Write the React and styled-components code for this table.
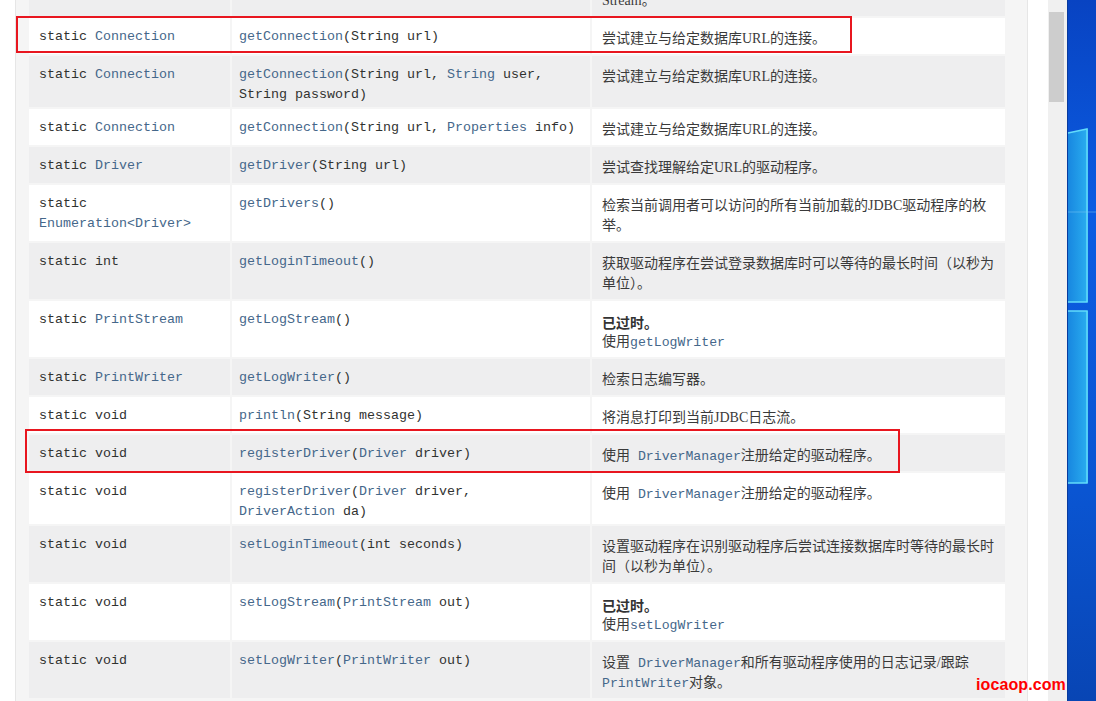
import React from 'react'
import styled, { createGlobalStyle } from 'styled-components'

const GlobalStyle = createGlobalStyle`
  html, body {
    margin: 0;
    padding: 0;
    background: #fff;
    overflow: hidden;
  }
  * { box-sizing: border-box; }
`

const LINK = '#45678a'
const TEXT = '#303230'
const MONO = '"Liberation Mono", "DejaVu Sans Mono", monospace'

const Screen = styled.div`
  position: relative;
  display: flex;
  width: 1096px;
  height: 701px;
  overflow: hidden;
  background: #fff;
`

const Viewport = styled.div`
  position: relative;
  flex: none;
  width: 1048px;
  height: 100%;
  padding: 0 20px 0 15px;
  overflow: hidden;
  background: #fff;
`

const Card = styled.div`
  margin-top: -42px;
  padding: 0 20px 2px 11px;
  background: #f5f5f5;
  border-left: 1px solid #e6e6e6;
  border-right: 1px solid #e6e6e6;
  border-bottom: 1px solid #e6e6e6;
`

const Table = styled.div`
  display: grid;
  grid-template-columns: 201px 358px 413px;
  gap: 2px;
  padding: 2px;
  background: #f5f5f5;
`

const Cell = styled.div`
  background: ${p => (p.$alt ? '#eeeeef' : '#fff')};
  color: ${TEXT};
  line-height: 20px;
`

const TypeCell = styled(Cell)`
  padding: 9px 8px 2px 10px;
  font-family: ${MONO};
  font-size: 13.33px;
`

const MethodCell = styled(Cell)`
  padding: 9px 8px 2px 7px;
  font-family: ${MONO};
  font-size: 13.33px;
`

const DescCell = styled(Cell)`
  padding: 11px 8px 5px 10px;
  font-family: "Liberation Serif", "Noto Sans CJK SC", serif;
  font-size: 14px;
  color: #3a3a3a;
`

const Link = styled.span`
  color: ${LINK};
`

const Code = styled.code`
  font-family: ${MONO};
  font-size: 13.2px;
  line-height: 1;
  color: ${LINK};
`

const Deprecated = styled.div`
  font-family: "Noto Sans CJK SC", sans-serif;
  font-weight: 700;
  color: #333;
`

const Highlight = styled.div`
  position: absolute;
  left: ${p => p.$x}px;
  top: ${p => p.$y}px;
  width: ${p => p.$w}px;
  height: ${p => p.$h}px;
  border: 2px solid #e8161f;
  pointer-events: none;
`

const Scrollbar = styled.div`
  flex: none;
  width: 19px;
  height: 100%;
  padding: 12px 3px 0 1px;
  background: #f0f0f0;
`

const Thumb = styled.div`
  height: 90px;
  background: #cdcdcd;
`

const Desktop = styled.div`
  flex: none;
  width: 29px;
  height: 100%;
  background: #0a4fc8;
  svg { display: block; }
`

const Watermark = styled.div`
  position: absolute;
  left: 976px;
  top: 677px;
  font-family: "Liberation Sans", Arial, sans-serif;
  font-size: 16px;
  font-weight: 700;
  line-height: 16px;
  color: #ff0000;
  letter-spacing: 0.1px;
`

const rows = [
  {
    type: ['void'],
    method: ['deregisterDriver', [['Driver', 'driver', true]]],
    desc: <>从 <Code>DriverManager</Code>的日志记录中删除 Print<br />Stream。</>,
  },
  {
    type: ['Connection', true],
    method: ['getConnection', [['String', 'url']]],
    desc: '尝试建立与给定数据库URL的连接。',
  },
  {
    type: ['Connection', true],
    method: ['getConnection', [['String', 'url'], ['String', 'user', true], ['String', 'password']]],
    desc: '尝试建立与给定数据库URL的连接。',
  },
  {
    type: ['Connection', true],
    method: ['getConnection', [['String', 'url'], ['Properties', 'info', true]]],
    desc: '尝试建立与给定数据库URL的连接。',
  },
  {
    type: ['Driver', true],
    method: ['getDriver', [['String', 'url']]],
    desc: '尝试查找理解给定URL的驱动程序。',
  },
  {
    type: ['Enumeration<Driver>', true],
    method: ['getDrivers', []],
    desc: '检索当前调用者可以访问的所有当前加载的JDBC驱动程序的枚举。',
  },
  {
    type: ['int'],
    method: ['getLoginTimeout', []],
    desc: '获取驱动程序在尝试登录数据库时可以等待的最长时间（以秒为单位）。',
  },
  {
    type: ['PrintStream', true],
    method: ['getLogStream', []],
    desc: <><Deprecated>已过时。</Deprecated>使用<Code>getLogWriter</Code></>,
  },
  {
    type: ['PrintWriter', true],
    method: ['getLogWriter', []],
    desc: '检索日志编写器。',
  },
  {
    type: ['void'],
    method: ['println', [['String', 'message']]],
    desc: '将消息打印到当前JDBC日志流。',
  },
  {
    type: ['void'],
    method: ['registerDriver', [['Driver', 'driver', true]]],
    desc: <>使用<Code> DriverManager</Code>注册给定的驱动程序。</>,
  },
  {
    type: ['void'],
    method: ['registerDriver', [['Driver', 'driver', true], ['DriverAction', 'da', true]]],
    desc: <>使用<Code> DriverManager</Code>注册给定的驱动程序。</>,
  },
  {
    type: ['void'],
    method: ['setLoginTimeout', [['int', 'seconds']]],
    desc: '设置驱动程序在识别驱动程序后尝试连接数据库时等待的最长时间（以秒为单位）。',
  },
  {
    type: ['void'],
    method: ['setLogStream', [['PrintStream', 'out', true]]],
    desc: <><Deprecated>已过时。</Deprecated>使用<Code>setLogWriter</Code></>,
  },
  {
    type: ['void'],
    method: ['setLogWriter', [['PrintWriter', 'out', true]]],
    desc: <>设置<Code> DriverManager</Code>和所有驱动程序使用的日志记录/跟踪 <Code>PrintWriter</Code>对象。</>,
  },
]

const Signature = ({ name, params }) => (
  <>
    <Link>{name}</Link>(
    {params.map(([type, arg, link], i) => (
      <React.Fragment key={i}>
        {i > 0 && ', '}
        {link ? <Link>{type}</Link> : type}
        {'\u00a0' + arg}
      </React.Fragment>
    ))}
    )
  </>
)

const Row = ({ row, alt }) => {
  const [typeName, typeLink] = row.type
  return (
    <>
      <TypeCell $alt={alt}>
        static {typeLink ? <Link>{typeName}</Link> : typeName}
      </TypeCell>
      <MethodCell $alt={alt}>
        <Signature name={row.method[0]} params={row.method[1]} />
      </MethodCell>
      <DescCell $alt={alt}>{row.desc}</DescCell>
    </>
  )
}

const WindowsWallpaper = () => (
  <svg width="29" height="701" viewBox="0 0 29 701">
    <defs>
      <linearGradient id="wallBg" x1="0" y1="0" x2="0" y2="1">
        <stop offset="0" stopColor="#0843c2" />
        <stop offset="0.3" stopColor="#0b5ce2" />
        <stop offset="0.7" stopColor="#0a55d2" />
        <stop offset="1" stopColor="#0845b4" />
      </linearGradient>
      <linearGradient id="wallPane" x1="0" y1="0" x2="1" y2="0">
        <stop offset="0" stopColor="#1887e0" />
        <stop offset="1" stopColor="#2aaef0" />
      </linearGradient>
    </defs>
    <rect width="29" height="701" fill="url(#wallBg)" />
    <polygon points="1,133 21,129 21,302 1,302" fill="url(#wallPane)" />
    <polygon points="1,311 21,311 21,483 1,483" fill="url(#wallPane)" />
    <polyline points="1,133 20,129 20,302 1,302" fill="none" stroke="#62dcfa" strokeWidth="1.5" />
    <polyline points="1,311 20,311 20,483 1,483" fill="none" stroke="#62dcfa" strokeWidth="1.5" />
    <line x1="1" y1="212" x2="29" y2="212" stroke="#7cc8f4" strokeOpacity="0.5" strokeWidth="1" />
    <rect x="0" y="0" width="1" height="701" fill="#083a9e" />
  </svg>
)

export default function App() {
  return (
    <>
      <GlobalStyle />
      <Screen>
        <Viewport>
          <Card>
            <Table>
              {rows.map((row, i) => (
                <Row key={i} row={row} alt={i % 2 === 0} />
              ))}
            </Table>
          </Card>
          <Highlight $x={16} $y={16} $w={836} $h={37} />
          <Highlight $x={25} $y={429} $w={875} $h={44} />
        </Viewport>
        <Scrollbar>
          <Thumb />
        </Scrollbar>
        <Desktop>
          <WindowsWallpaper />
        </Desktop>
        <Watermark>iocaop.com</Watermark>
      </Screen>
    </>
  )
}
